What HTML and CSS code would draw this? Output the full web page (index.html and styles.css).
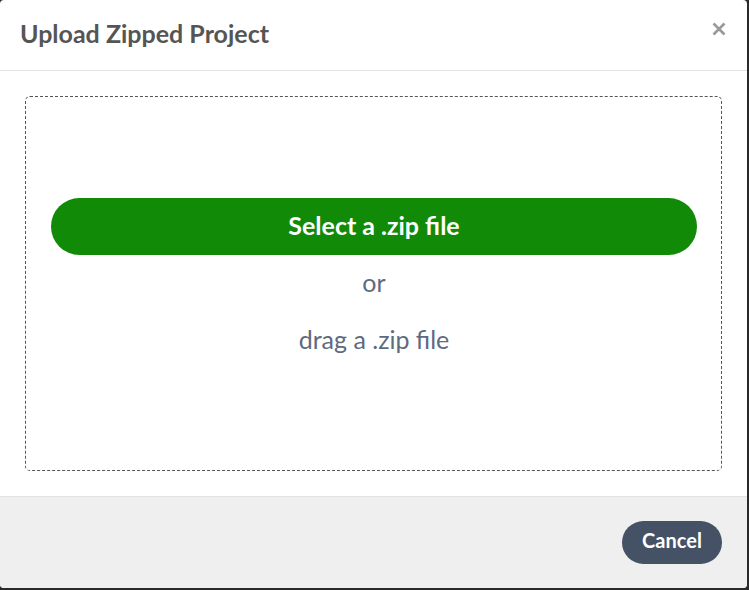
FILE: index.html
```html
<!DOCTYPE html>
<html>
<head>
<meta charset="utf-8">
<link rel="stylesheet" href="styles.css">
</head>
<body>
<div class="modal">
  <div class="header">
    <h1 class="title">Upload Zipped Project</h1>
    <button class="close" aria-label="Close">
      <svg width="14" height="14" viewBox="0 0 14 14"><path d="M1.5 1.5 L12.5 12.5 M12.5 1.5 L1.5 12.5" stroke="#999999" stroke-width="2.6" stroke-linecap="butt"/></svg>
    </button>
  </div>
  <div class="body">
    <div class="drop">
      <button class="select">Select a .zip file</button>
      <div class="or">or</div>
      <div class="drag">drag a .zip file</div>
    </div>
  </div>
  <div class="footer">
    <button class="cancel">Cancel</button>
  </div>
</div>
</body>
</html>
```
FILE: styles.css
```css
html, body {
  margin: 0;
  padding: 0;
  background: #2a2a2a;
  width: 749px;
  height: 590px;
  overflow: hidden;
  font-family: Lato, "Open Sans", sans-serif;
}
.modal {
  width: 747px;
  height: 588px;
  background: #ffffff;
  border-radius: 4px;
  overflow: hidden;
  display: flex;
  flex-direction: column;
}
.header {
  height: 70px;
  border-bottom: 1px solid #e2e2e2;
  display: flex;
  align-items: center;
  justify-content: space-between;
  padding: 0 21px 0 20px;
  box-sizing: content-box;
}
.title {
  margin: 0;
  font-size: 25px;
  font-weight: 700;
  color: #555555;
  line-height: 30px;
  padding-bottom: 4px;
}
.close {
  border: none;
  background: none;
  padding: 0;
  width: 14px;
  height: 14px;
  display: flex;
  margin-bottom: 12px;
}
.body {
  padding: 25px 25px 25px 25px;
  flex: 1;
  display: flex;
}
.drop {
  flex: 1;
  border: 1px dashed #555555;
  border-radius: 5px;
  display: flex;
  flex-direction: column;
  align-items: stretch;
  padding: 101px 24px 0 25px;
}
.select {
  height: 57px;
  border: none;
  border-radius: 29px;
  background: #118a08;
  color: #ffffff;
  font-family: Lato, sans-serif;
  font-weight: 700;
  font-size: 25px;
  padding: 0 0 4px 0;
}
.or, .drag {
  text-align: center;
  color: #5d6a80;
  font-size: 25px;
  line-height: 30px;
}
.or {
  margin-top: 12px;
}
.drag {
  margin-top: 27px;
}
.footer {
  height: 92px;
  border-top: 1px solid #e2e2e2;
  background: #efefef;
  display: flex;
  justify-content: flex-end;
  align-items: flex-start;
  padding: 24px 25px 0 0;
  box-sizing: border-box;
}
.cancel {
  width: 100px;
  height: 43px;
  border: none;
  border-radius: 22px;
  background: #455165;
  color: #ffffff;
  font-family: Lato, sans-serif;
  font-weight: 700;
  font-size: 20px;
  padding: 0 0 5px 0;
}
```
